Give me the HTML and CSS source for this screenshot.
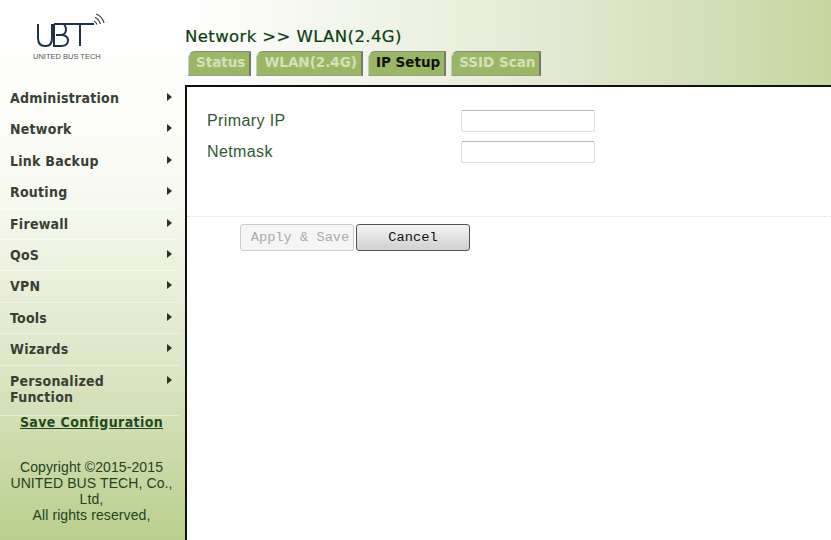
FILE: index.html
```html
<!DOCTYPE html>
<html lang="en">

<head>
    <meta charset="UTF-8">
    <title>Network - WLAN(2.4G)</title>
    <link rel="stylesheet" href="styles.css">
</head>

<body>
    <div class="page">
        <aside class="sidebar">
            <div class="logo">
                <svg class="logo-mark" width="70" height="36" viewBox="0 0 70 36" fill="none">
                    <path d="M2 11V25Q2 33 9 33H10Q16 33 16 25V11" stroke="#1f3347" stroke-width="2"/>
                    <path d="M18 11H58M18 11V33H25Q32 33 32 27.5Q32 22 25 22H20M24 22Q30 22 30 16.5Q30 14 28 11" stroke="#1f3347" stroke-width="2"/>
                    <path d="M44 11V33" stroke="#1f3347" stroke-width="2"/>
                    <path d="M58 8Q60 9 61 11.5M59 4.5Q63 6 64.5 11M60 1Q66 3 68 10" stroke="#3a4a58" stroke-width="1.2"/>
                </svg>
                <div class="logo-name">UNITED BUS TECH</div>
            </div>
            <ul class="menu">
                <li>Administration</li>
                <li>Network</li>
                <li>Link Backup</li>
                <li>Routing</li>
                <li>Firewall</li>
                <li>QoS</li>
                <li>VPN</li>
                <li>Tools</li>
                <li>Wizards</li>
                <li class="tall">Personalized Function</li>
            </ul>
            <a class="save" href="#">Save Configuration</a>
            <p class="copyright">Copyright ©2015-2015<br>UNITED BUS TECH, Co., Ltd,<br>All rights reserved,</p>
        </aside>

        <main class="main">
            <header class="top">
                <h1>Network &gt;&gt; WLAN(2.4G)</h1>
                <nav class="tabs">
                    <a href="#">Status</a>
                    <a href="#">WLAN(2.4G)</a>
                    <a href="#" class="active">IP Setup</a>
                    <a href="#">SSID Scan</a>
                </nav>
            </header>
            <section class="content">
                <div class="fields">
                    <label for="ip">Primary IP</label>
                    <input type="text" id="ip">
                    <label for="mask">Netmask</label>
                    <input type="text" id="mask">
                </div>
                <div class="buttons">
                    <button type="button" disabled>Apply &amp; Save</button>
                    <button type="button">Cancel</button>
                </div>
            </section>
        </main>
    </div>
</body>

</html>
```

FILE: styles.css
```css
html,
body {
    height: 100%;
}

body {
    margin: 0;
    overflow: hidden;
    font-family: 'Liberation Sans', sans-serif;
    background: #fff;
}

.page {
    display: flex;
    height: 540px;
}

.sidebar {
    width: 185px;
    flex-shrink: 0;
    background: linear-gradient(#fff 5%, #f8faf2 35%, #dde6c6 68%, #b9cf8d 100%);
}

.logo {
    height: 83px;
    padding-top: 13px;
    box-sizing: border-box;
}

.logo-mark {
    display: block;
    margin-left: 36px;
}

.logo-name {
    margin-top: 3px;
    padding-left: 33px;
    font-size: 7.5px;
    color: #555;
}

.menu {
    list-style: none;
    margin: 0;
    padding: 0;
    width: 179px;
}

.menu li {
    position: relative;
    padding: 7px 30px 7.4px 10px;
    border-bottom: 1px solid rgba(255, 255, 255, 0.45);
    font: bold 14px/16px 'DejaVu Sans', sans-serif;
    font-stretch: condensed;
    color: #3a3f36;
    letter-spacing: 0.25px;
}

.menu li.tall {
    padding-bottom: 10px;
}

.menu li::after {
    content: "";
    position: absolute;
    right: 7px;
    top: 10px;
    border-left: 5px solid #2c302a;
    border-top: 4px solid transparent;
    border-bottom: 4px solid transparent;
}

.save {
    display: block;
    width: 183px;
    margin-top: -2px;
    text-align: center;
    font: bold 14px/16px 'DejaVu Sans', sans-serif;
    font-stretch: condensed;
    letter-spacing: 0.4px;
    color: #1f4a1f;
}

.copyright {
    width: 183px;
    margin: 29px 0 0;
    text-align: center;
    font-size: 14px;
    line-height: 16px;
    letter-spacing: 0.1px;
    color: #24421f;
}

.main {
    flex: 1;
    display: flex;
    flex-direction: column;
    min-width: 0;
}

.top {
    height: 85px;
    box-sizing: border-box;
    padding-top: 28px;
    background: linear-gradient(to right, #fff 0%, #e2e9d1 58%, #c6d6a0 100%);
}

.top h1 {
    margin: 0;
    font: 16.5px/18px 'DejaVu Sans', sans-serif;
    letter-spacing: 0.4px;
    color: #0a3d10;
    -webkit-text-stroke: 0.2px #0a3d10;
}

.tabs {
    display: flex;
    gap: 5px;
    margin: 5px 0 0 3px;
}

.tabs a {
    padding: 2px 4px 4px 7px;
    font: bold 13.5px/17px 'DejaVu Sans', sans-serif;
    color: #d5e0bd;
    background: #9ab863;
    border: 1px solid #c9cfc0;
    border-right: 2px solid #777;
    border-top: 1px solid #888;
    border-bottom: 1px solid #999;
    border-top-left-radius: 7px;
    text-decoration: none;
}

.tabs a.active {
    color: #111;
}

.content {
    flex: 1;
    background: #fff;
    border-top: 2px solid #111;
    border-left: 2px solid #111;
}

.fields {
    display: grid;
    grid-template-columns: 254px 134px;
    row-gap: 9px;
    align-items: center;
    padding: 23px 0 53px 20px;
    border-bottom: 1px dotted #ddd;
}

.fields label {
    font-size: 16px;
    letter-spacing: 0.4px;
    color: #2f5a2f;
}

.fields input {
    height: 22px;
    padding: 0;
    box-sizing: border-box;
    border: 1px solid #dcdfe8;
    border-top-color: #b5b8c0;
    border-radius: 2px;
    background: #fff;
}

.buttons {
    display: flex;
    gap: 2px;
    padding: 7px 0 0 53px;
}

.buttons button {
    width: 114px;
    height: 27px;
    padding: 0;
    font: 13.7px 'Liberation Mono', monospace;
    color: #111;
    background: linear-gradient(#f4f4f4, #d0d0d0);
    border: 1px solid #555;
    border-radius: 3px;
}

.buttons button:disabled {
    padding-left: 6px;
    color: #aaa;
    background: #f5f5f5;
    border-color: #ccc;
}
```
